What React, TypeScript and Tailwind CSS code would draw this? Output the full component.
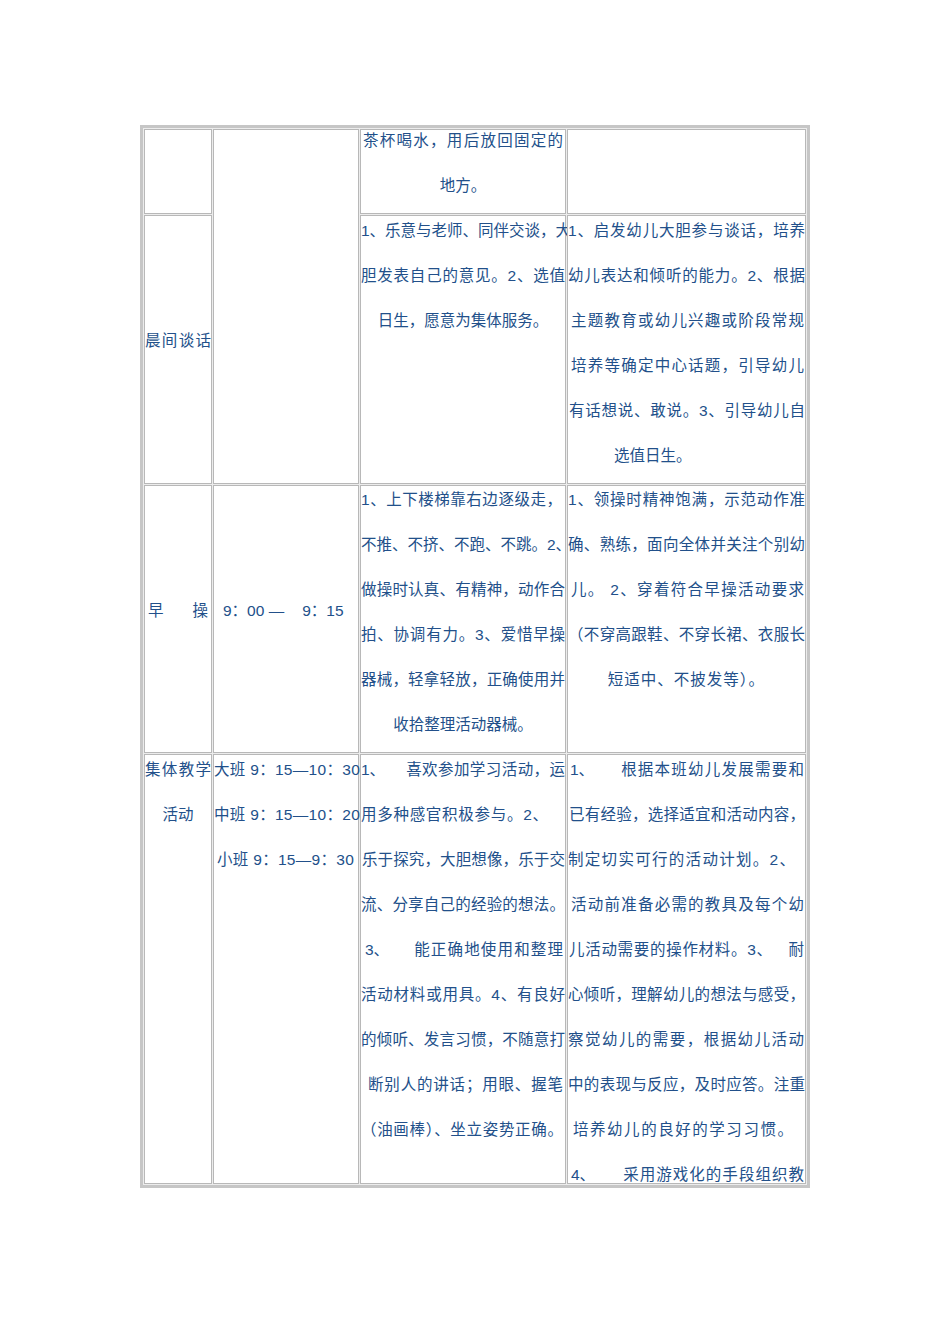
import React from "react";

type A = "j" | "c" | "l";

function Line({ children, a = "j", c = "" }: { children: React.ReactNode; a?: A; c?: string }) {
  const al =
    a === "j"
      ? "text-justify [text-align-last:justify]"
      : a === "c"
      ? "text-center"
      : "text-left";
  return <div className={`h-[45px] leading-[28px] whitespace-nowrap ${al} ${c}`}>{children}</div>;
}

function Split({
  lead,
  rest,
  c = "",
  gap = "ml-[21px]",
}: {
  lead: string;
  rest: string;
  c?: string;
  gap?: string;
}) {
  return (
    <div className={`h-[45px] leading-[28px] whitespace-nowrap flex ${c}`}>
      <span>{lead}</span>
      <span className={`flex-1 text-justify [text-align-last:justify] ${gap}`}>{rest}</span>
    </div>
  );
}

const cell = "border border-[#b8b8b8] bg-white min-w-0";

export default function App() {
  return (
    <div
      className="w-[950px] min-h-[1344px] bg-white pt-[125px] pl-[140px] text-[15.5px] text-[#22508a]"
      style={{ fontFamily: '"Liberation Sans", "Noto Sans CJK SC", sans-serif' }}
    >
      <div className="inline-block border-[3px] border-[#c6c6c6] bg-[#ececec] p-px">
        <div className="grid grid-cols-[68px_146px_206px_239px] grid-rows-[85px_269px_268px_430px] gap-px">
          {/* Row 1 */}
          <div className={`${cell} col-start-1 row-start-1`} />
          <div className={`${cell} col-start-2 row-start-1 row-span-2`} />
          <div className={`${cell} col-start-3 row-start-1 px-[2px]`}>
            <div className="-mt-[3px]">
              <Line>茶杯喝水，用后放回固定的</Line>
              <Line a="c">地方。</Line>
            </div>
          </div>
          <div className={`${cell} col-start-4 row-start-1`} />

          {/* Row 2 */}
          <div className={`${cell} col-start-1 row-start-2 flex flex-col justify-center`}>
            <Line>晨间谈话</Line>
          </div>
          <div className={`${cell} col-start-3 row-start-2 pt-px`}>
            <Line>1、乐意与老师、同伴交谈，大</Line>
            <Line>胆发表自己的意见。2、选值</Line>
            <Line a="c">日生，愿意为集体服务。</Line>
          </div>
          <div className={`${cell} col-start-4 row-start-2 pt-px`}>
            <Line>1、启发幼儿大胆参与谈话，培养</Line>
            <Line>幼儿表达和倾听的能力。2、根据</Line>
            <Line c="pl-[3px] pr-[1px]">主题教育或幼儿兴趣或阶段常规</Line>
            <Line c="pl-[3px] pr-[1px]">培养等确定中心话题，引导幼儿</Line>
            <Line c="pl-[1px]">有话想说、敢说。3、引导幼儿自</Line>
            <Line a="l" c="pl-[46px]">选值日生。</Line>
          </div>

          {/* Row 3 */}
          <div className={`${cell} col-start-1 row-start-3 flex flex-col justify-center`}>
            <div className="h-[45px] leading-[28px] flex justify-between px-[3px]">
              <span>早</span>
              <span>操</span>
            </div>
          </div>
          <div className={`${cell} col-start-2 row-start-3 flex flex-col justify-center`}>
            <div className="h-[45px] leading-[28px] whitespace-nowrap flex pl-[9px]">
              <span>9：00 —</span>
              <span className="ml-[18px]">9：15</span>
            </div>
          </div>
          <div className={`${cell} col-start-3 row-start-3`}>
            <Line c="pr-[3px]">1、上下楼梯靠右边逐级走，</Line>
            <Line>不推、不挤、不跑、不跳。2、</Line>
            <Line>做操时认真、有精神，动作合</Line>
            <Line>拍、协调有力。3、爱惜早操</Line>
            <Line>器械，轻拿轻放，正确使用并</Line>
            <Line a="c">收拾整理活动器械。</Line>
          </div>
          <div className={`${cell} col-start-4 row-start-3`}>
            <Line>1、领操时精神饱满，示范动作准</Line>
            <Line>确、熟练，面向全体并关注个别幼</Line>
            <Line c="pl-[3px] pr-[1px]">儿。 2、穿着符合早操活动要求</Line>
            <Line>（不穿高跟鞋、不穿长裙、衣服长</Line>
            <Line a="c" c="tracking-[1px]">短适中、不披发等）。</Line>
          </div>

          {/* Row 4 */}
          <div className={`${cell} col-start-1 row-start-4 pt-px`}>
            <Line>集体教学</Line>
            <Line a="c">活动</Line>
          </div>
          <div className={`${cell} col-start-2 row-start-4 pt-px`}>
            <Line a="l" c="tracking-[0.3px]">大班 9：15—10：30</Line>
            <Line a="l" c="tracking-[0.3px]">中班 9：15—10：20</Line>
            <Line a="l" c="pl-[3px] tracking-[0.3px]">小班 9：15—9：30</Line>
          </div>
          <div className={`${cell} col-start-3 row-start-4 pt-px`}>
            <Split lead="1、" rest="喜欢参加学习活动，运" />
            <Line c="pr-[17px]">用多种感官积极参与。2、</Line>
            <Line c="pl-[1px]">乐于探究，大胆想像，乐于交</Line>
            <Line>流、分享自己的经验的想法。</Line>
            <Split lead="3、" rest="能正确地使用和整理" c="pl-[4px] pr-[2px]" gap="ml-[25px]" />
            <Line>活动材料或用具。4、有良好</Line>
            <Line>的倾听、发言习惯，不随意打</Line>
            <Line c="pl-[7px] pr-[2px]">断别人的讲话；用眼、握笔</Line>
            <Line c="pr-[2px]">（油画棒）、坐立姿势正确。</Line>
          </div>
          <div className={`${cell} col-start-4 row-start-4 pt-px`}>
            <Split lead="1、" rest="根据本班幼儿发展需要和" c="pl-[2px] pr-[1px]" gap="ml-[27px]" />
            <Line c="pl-[1px]">已有经验，选择适宜和活动内容，</Line>
            <Line c="pr-[10px]">制定切实可行的活动计划。2、</Line>
            <Line c="pl-[3px] pr-[1px]">活动前准备必需的教具及每个幼</Line>
            <div className="h-[45px] leading-[28px] whitespace-nowrap flex pl-[1px]">
              <span className="w-[203px] text-justify [text-align-last:justify]">儿活动需要的操作材料。3、</span>
              <span className="ml-auto pr-[1px]">耐</span>
            </div>
            <Line>心倾听，理解幼儿的想法与感受，</Line>
            <Line c="pr-[1px]">察觉幼儿的需要，根据幼儿活动</Line>
            <Line>中的表现与反应，及时应答。注重</Line>
            <Line c="pl-[5px] pr-[12px]">培养幼儿的良好的学习习惯。</Line>
            <Split lead="4、" rest="采用游戏化的手段组织教" c="pl-[3px] pr-[1px]" gap="ml-[28px]" />
          </div>
        </div>
      </div>
    </div>
  );
}
